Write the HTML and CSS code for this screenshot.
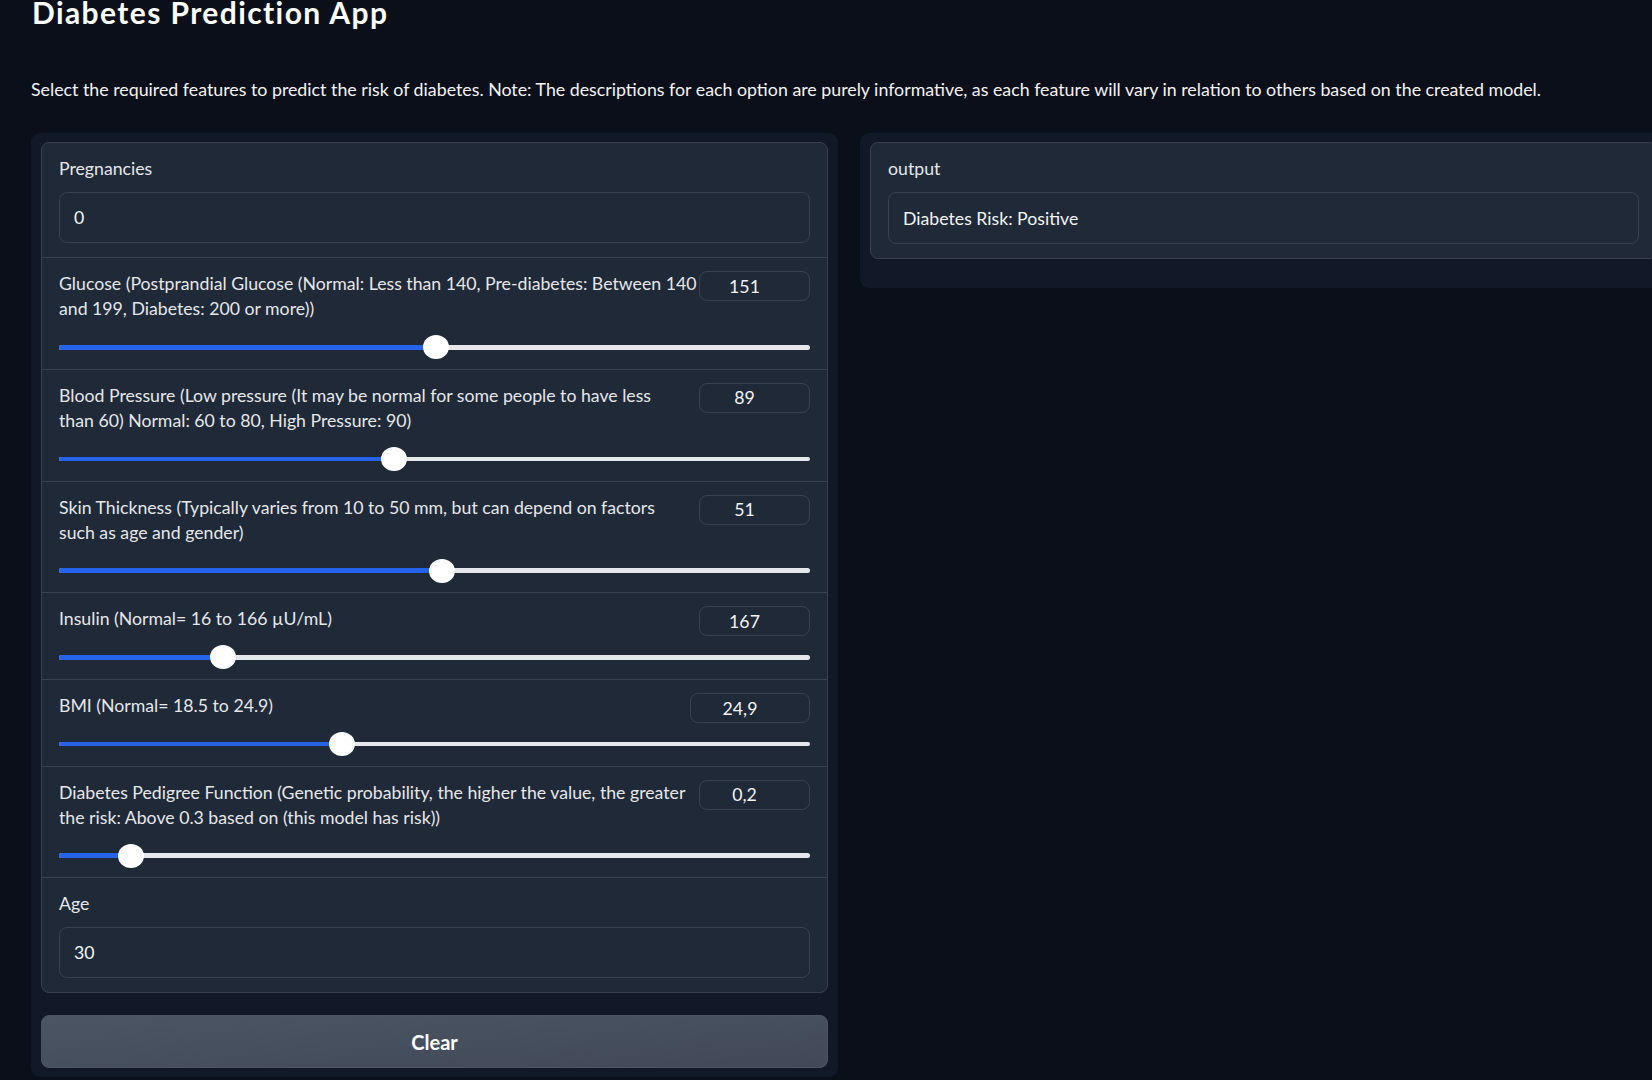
FILE: index.html
```html
<!DOCTYPE html>
<html lang="en">
<head>
<meta charset="utf-8">
<title>Diabetes Prediction App</title>
<link rel="stylesheet" href="styles.css">
</head>
<body>
<div class="app">
  <h1 class="title">Diabetes Prediction App</h1>
  <p class="desc">Select the required features to predict the risk of diabetes. Note: The descriptions for each option are purely informative, as each feature will vary in relation to others based on the created model.</p>

  <div class="columns">
    <div class="panel panel-left">
      <div class="form">
        <div class="field field-text">
          <div class="lbl">Pregnancies</div>
          <div class="textbox">0</div>
        </div>

        <div class="field field-slider">
          <div class="head">
            <div class="lbl">Glucose (Postprandial Glucose (Normal: Less than 140, Pre-diabetes: Between 140<br>and 199, Diabetes: 200 or more))</div>
            <div class="numbox">151</div>
          </div>
          <div class="slider"><div class="track" style="--v:50.2%"><div class="fill"></div><div class="thumb"></div></div></div>
        </div>

        <div class="field field-slider">
          <div class="head">
            <div class="lbl">Blood Pressure (Low pressure (It may be normal for some people to have less<br>than 60) Normal: 60 to 80, High Pressure: 90)</div>
            <div class="numbox">89</div>
          </div>
          <div class="slider"><div class="track" style="--v:44.6%"><div class="fill"></div><div class="thumb"></div></div></div>
        </div>

        <div class="field field-slider">
          <div class="head">
            <div class="lbl">Skin Thickness (Typically varies from 10 to 50 mm, but can depend on factors<br>such as age and gender)</div>
            <div class="numbox">51</div>
          </div>
          <div class="slider"><div class="track" style="--v:51%"><div class="fill"></div><div class="thumb"></div></div></div>
        </div>

        <div class="field field-slider">
          <div class="head">
            <div class="lbl">Insulin (Normal= 16 to 166 µU/mL)</div>
            <div class="numbox">167</div>
          </div>
          <div class="slider"><div class="track" style="--v:21.9%"><div class="fill"></div><div class="thumb"></div></div></div>
        </div>

        <div class="field field-slider">
          <div class="head">
            <div class="lbl">BMI (Normal= 18.5 to 24.9)</div>
            <div class="numbox numbox-wide">24,9</div>
          </div>
          <div class="slider"><div class="track" style="--v:37.7%"><div class="fill"></div><div class="thumb"></div></div></div>
        </div>

        <div class="field field-slider">
          <div class="head">
            <div class="lbl">Diabetes Pedigree Function (Genetic probability, the higher the value, the greater<br>the risk: Above 0.3 based on (this model has risk))</div>
            <div class="numbox">0,2</div>
          </div>
          <div class="slider"><div class="track" style="--v:9.6%"><div class="fill"></div><div class="thumb"></div></div></div>
        </div>

        <div class="field field-text field-last">
          <div class="lbl">Age</div>
          <div class="textbox">30</div>
        </div>
      </div>
      <button class="btn" type="button">Clear</button>
    </div>

    <div class="panel panel-right">
      <div class="form">
        <div class="field field-text field-out">
          <div class="lbl">output</div>
          <div class="textbox textbox-out">Diabetes Risk: Positive</div>
        </div>
      </div>
    </div>
  </div>
</div>
</body>
</html>
```

FILE: styles.css
```css
html, body {
  margin: 0;
  padding: 0;
  background: #0b0f19;
  overflow: hidden;
}

body {
  font-family: "Lato", "Noto Sans", sans-serif;
  color: #f3f4f6;
}

.app {
  width: 1700px;
  padding-left: 31px;
  box-sizing: border-box;
}

.title {
  margin: 0 0 0 1px;
  font-size: 30px;
  line-height: 24px;
  letter-spacing: 1.4px;
  font-weight: 700;
  color: #ffffff;
  white-space: nowrap;
}

.desc {
  margin: 52.6px 0 0 0;
  font-size: 17.8px;
  line-height: 25px;
  color: #f3f4f6;
  white-space: nowrap;
}

.columns {
  display: flex;
  gap: 22px;
  margin-top: 31.7px;
  align-items: flex-start;
}

.panel {
  width: 807px;
  flex: 0 0 807px;
  box-sizing: border-box;
  background: #111827;
  border-radius: 9px;
  padding: 9px 10px 8.4px 10px;
}

.panel-right {
  padding-bottom: 28.7px;
}

.form {
  background: #1f2937;
  border: 1px solid #374151;
  border-radius: 8px;
  overflow: hidden;
}

.field {
  padding: 13px 17px 0 17px;
}

.field + .field {
  border-top: 1px solid #374151;
}

.lbl {
  font-size: 17.7px;
  line-height: 25px;
  color: #e5e7eb;
  white-space: nowrap;
}

.field-text {
  padding-bottom: 14px;
}

.field-last {
  padding-bottom: 13.3px;
}

.textbox {
  margin-top: 11px;
  height: 51px;
  box-sizing: border-box;
  border: 1px solid #374151;
  border-radius: 8px;
  background: #1f2937;
  padding: 0 14px;
  display: flex;
  align-items: center;
  font-size: 17.7px;
  color: #f3f4f6;
}

.textbox-out {
  height: 52px;
}

.field-slider {
  padding-bottom: 9.7px;
}

.head {
  display: flex;
  justify-content: space-between;
  align-items: flex-start;
}

.numbox {
  flex: 0 0 111px;
  width: 111px;
  height: 30px;
  margin-bottom: -5px;
  box-sizing: border-box;
  border: 1px solid #374151;
  border-radius: 8px;
  display: flex;
  align-items: center;
  justify-content: center;
  padding-right: 20px;
  font-size: 17.7px;
  color: #f3f4f6;
}

.numbox-wide {
  flex-basis: 120px;
  width: 120px;
}

.slider {
  margin-top: 14px;
  height: 24px;
  display: flex;
  align-items: center;
}

.track {
  position: relative;
  flex: 1;
  height: 4.5px;
  border-radius: 3px;
  background: #e5e7eb;
}

.fill {
  height: 100%;
  width: var(--v);
  border-radius: 3px 0 0 3px;
  background: #2563eb;
}

.thumb {
  position: absolute;
  top: 50%;
  left: var(--v);
  width: 26px;
  height: 24px;
  border-radius: 50%;
  background: #ffffff;
  transform: translate(-50%, -50%);
}

.btn {
  display: block;
  width: 100%;
  margin-top: 22.2px;
  height: 53.3px;
  border: 1px solid #4b5563;
  border-radius: 8px;
  background: linear-gradient(to bottom right, #4b5563, #414958);
  color: #ffffff;
  font-family: "Lato", "Noto Sans", sans-serif;
  font-size: 20px;
  font-weight: 700;
  cursor: pointer;
}
```
